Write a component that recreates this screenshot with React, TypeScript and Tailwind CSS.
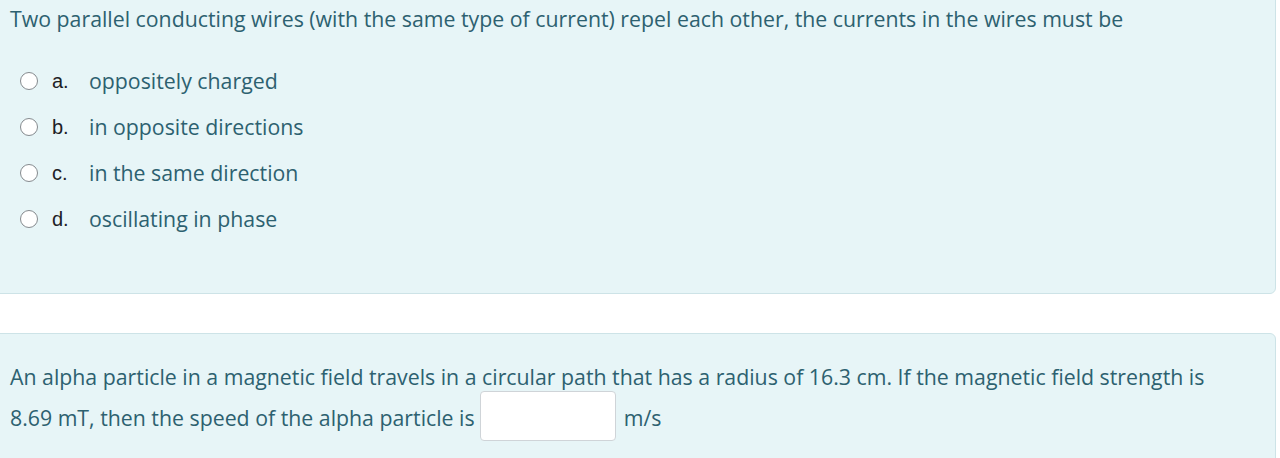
const options = [
  { letter: "a.", text: "oppositely charged" },
  { letter: "b.", text: "in opposite directions" },
  { letter: "c.", text: "in the same direction" },
  { letter: "d.", text: "oscillating in phase" },
];

const App = () => {
  return (
    <div className="h-[458px] w-[1280px] overflow-hidden bg-white font-['Open_Sans',sans-serif] text-[#2d6170]">
      {/* QUESTION 1 */}
      <div className="-mt-[10px] ml-[-6px] mr-[4px] h-[304px] rounded-md border border-[#cde3e7] bg-[#e7f5f7] pl-[15px] pt-[10px]">
        <p className="text-[21.3px] leading-[36px]">
          Two parallel conducting wires (with the same type of current) repel each other, the currents in the wires must be
        </p>
        <div className="mt-[26px] flex flex-col gap-[10px]">
          {options.map((o) => (
            <label key={o.letter} className="flex h-[36px] items-center">
              <span className="ml-[10px] h-[18px] w-[18px] rounded-full border border-[#858a8e] bg-white" />
              <span className="ml-[14px] w-[37px] font-['Liberation_Sans',sans-serif] text-[20px] text-[#1d2125]">
                {o.letter}
              </span>
              <span className="text-[21.3px]">{o.text}</span>
            </label>
          ))}
        </div>
      </div>

      {/* QUESTION 2 */}
      <div className="ml-[-6px] mr-[4px] mt-[39px] h-[160px] rounded-md border border-[#cde3e7] bg-[#e7f5f7] pl-[15px] pt-[23px]">
        <p className="text-[21.3px] leading-[40px]">
          An alpha particle in a magnetic field travels in a circular path that has a radius of 16.3 cm. If the magnetic field strength is
          <br />
          <span className="relative top-[-2px]">8.69 mT, then the speed of the alpha particle is</span>{" "}
          <input
            type="text"
            className="relative top-[-6px] ml-0 mr-[2px] h-[50px] w-[136px] rounded-[4px] border border-[#cfd4d8] bg-white align-middle"
          />{" "}
          <span className="relative top-[-2px]">m/s</span>
        </p>
      </div>
    </div>
  );
};

export default App;
